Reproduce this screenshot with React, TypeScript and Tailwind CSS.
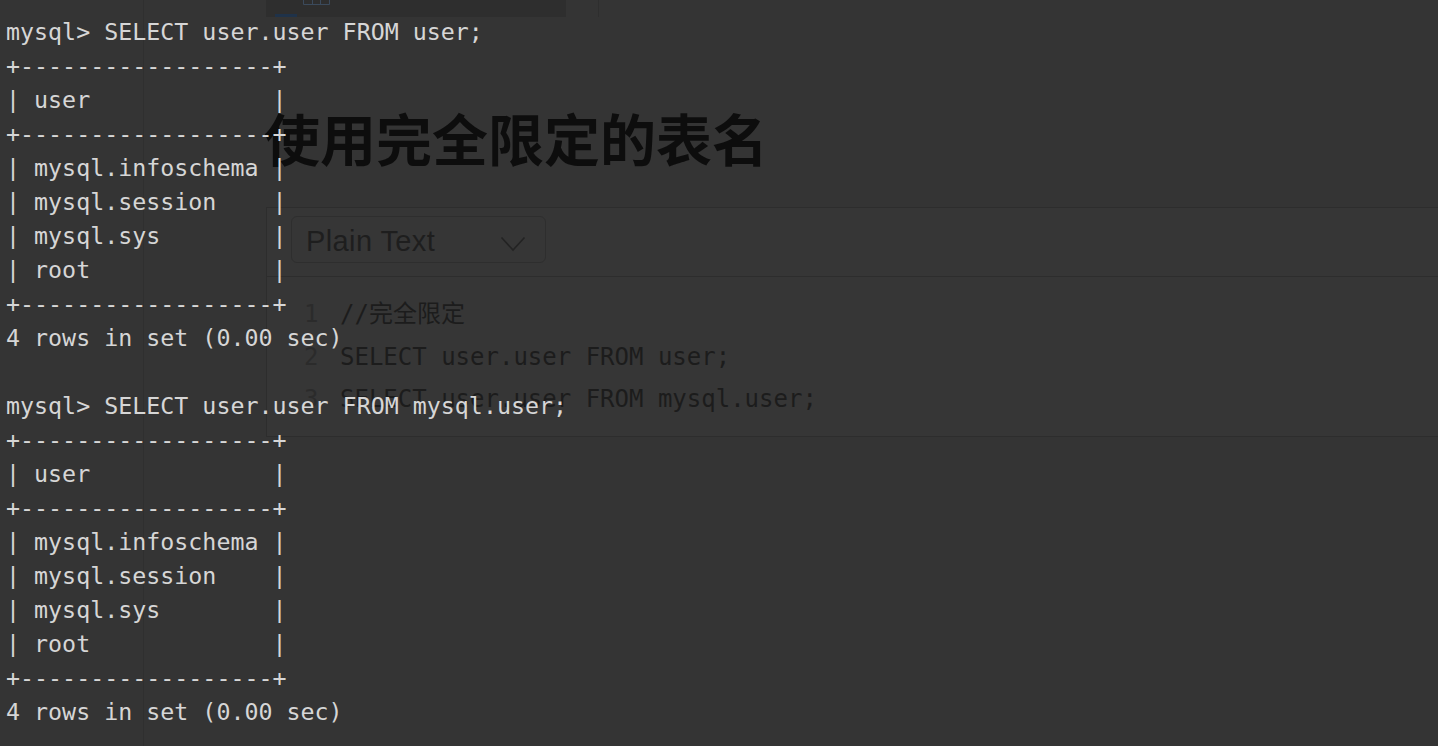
import React from 'react';

const mono = { fontFamily: '"DejaVu Sans Mono", "Noto Sans CJK SC", monospace' };

const terminalLines = [
  'mysql> SELECT user.user FROM user;',
  '+------------------+',
  '| user             |',
  '+------------------+',
  '| mysql.infoschema |',
  '| mysql.session    |',
  '| mysql.sys        |',
  '| root             |',
  '+------------------+',
  '4 rows in set (0.00 sec)',
  '',
  'mysql> SELECT user.user FROM mysql.user;',
  '+------------------+',
  '| user             |',
  '+------------------+',
  '| mysql.infoschema |',
  '| mysql.session    |',
  '| mysql.sys        |',
  '| root             |',
  '+------------------+',
  '4 rows in set (0.00 sec)',
];

const codeLines = ['//完全限定', 'SELECT user.user FROM user;', 'SELECT user.user FROM mysql.user;'];

function GridIcon() {
  return (
    <svg width="27" height="5" viewBox="0 0 27 5" className="block">
      <path d="M0.5 0 V4.5 H26.5 V0 M9.5 0 V4.5 M17.5 0 V4.5" fill="none" stroke="#3b4a5c" strokeWidth="1" />
    </svg>
  );
}

function Chevron() {
  return (
    <svg width="26" height="16" viewBox="0 0 26 16" className="block">
      <path d="M1.5 1.5 L13 14 L24.5 1.5" fill="none" stroke="#232323" strokeWidth="1.6" />
    </svg>
  );
}

function CodeBlock() {
  return (
    <div className="border border-r-0 border-[#2d2d2d] bg-[#363636]">
      <div className="h-[69px] border-b border-[#2d2d2d] pl-[24px] pt-[8px]">
        <div className="flex h-[47px] w-[255px] items-center justify-between rounded-[6px] border border-[#2e2e2e] pl-[14px] pr-[19px]">
          <span
            className="pt-[3px] text-[29px] leading-none tracking-[0.4px] text-[#1e1e1e]"
            style={{ fontFamily: '"Liberation Sans", Arial, sans-serif' }}
          >
            Plain Text
          </span>
          <div className="pt-[8px]">
            <Chevron />
          </div>
        </div>
      </div>
      <div className="pl-[37px] pt-[16px] pb-[15px] text-[24px] leading-[42.5px]" style={mono}>
        {codeLines.map((line, i) => (
          <div key={i} className="flex whitespace-pre">
            <span className="w-[14px] text-right text-[#2b2b2b]">{i + 1}</span>
            <span className="ml-[22px] text-[#1c1c1c]">{line}</span>
          </div>
        ))}
      </div>
    </div>
  );
}

export default function App() {
  return (
    <div className="relative flex h-[746px] w-full overflow-hidden bg-[#343434]">
      <div className="w-[144px] shrink-0 border-r border-[#2f2f2f]" />
      <div className="flex-1 pl-[122px]">
        <div className="flex h-[17px]">
          <div className="flex h-[17px] w-[300px] bg-[#2e2e2e]">
            <div className="ml-[9px] mt-[14px] h-[3px] w-[22px] bg-[#1f3249]" />
            <div className="ml-[6px]">
              <GridIcon />
            </div>
          </div>
          <div className="ml-[32px] h-[17px] w-px bg-[#2e2e2e]" />
        </div>
        <h1
          className="-ml-[2px] mt-[92px] mb-[42px] text-[56px] font-bold leading-[56px] text-[#0d0d0d]"
          style={{ fontFamily: '"Noto Sans CJK SC", "Noto Sans", sans-serif' }}
        >
          使用完全限定的表名
        </h1>
        <CodeBlock />
      </div>

      {/* terminal capture laid over the page */}
      <div className="absolute left-[6px] top-[15px] text-[23.3px] leading-[34px] text-[#d6d6d6]" style={mono}>
        {terminalLines.map((line, i) => (
          <div key={i} className="h-[34px] whitespace-pre">
            {line}
          </div>
        ))}
      </div>
    </div>
  );
}
